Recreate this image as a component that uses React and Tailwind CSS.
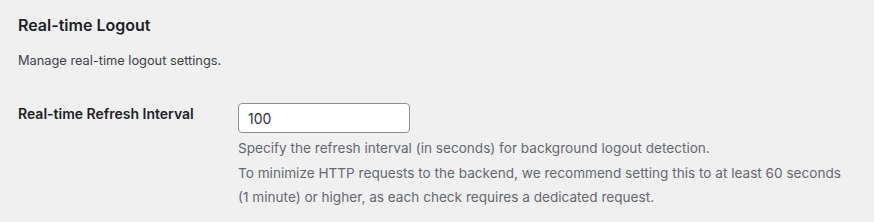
export default function App() {
  return (
    <div className="w-full h-[222px] bg-[#f0f0f1] text-[#1d2327] px-[18px] pt-[13px] font-['Inter',sans-serif] overflow-hidden">
      <h2 className="text-[16px] leading-[24px] font-semibold">Real-time Logout</h2>
      <p className="mt-[14px] text-[12.8px] leading-[20px] text-[#3c434a]">Manage real-time logout settings.</p>

      <div className="mt-[32px] flex">
        <div className="w-[220px] shrink-0 pt-[1px] text-[14px] leading-[20px] font-semibold">
          Real-time Refresh Interval
        </div>
        <div className="flex flex-col">
          <input
            type="text"
            defaultValue="100"
            className="w-[172px] h-[30px] bg-white border border-[#8c8f94] rounded-[4px] px-[9px] text-[14px] text-[#2c3338] outline-none"
          />
          <div className="mt-[3px] text-[13.6px] leading-[24px] text-[#646970]">
            <p>Specify the refresh interval (in seconds) for background logout detection.</p>
            <p className="mt-[1px]">
              To minimize HTTP requests to the backend, we recommend setting this to at least 60 seconds
              <br />
              (1 minute) or higher, as each check requires a dedicated request.
            </p>
          </div>
        </div>
      </div>
    </div>
  )
}
